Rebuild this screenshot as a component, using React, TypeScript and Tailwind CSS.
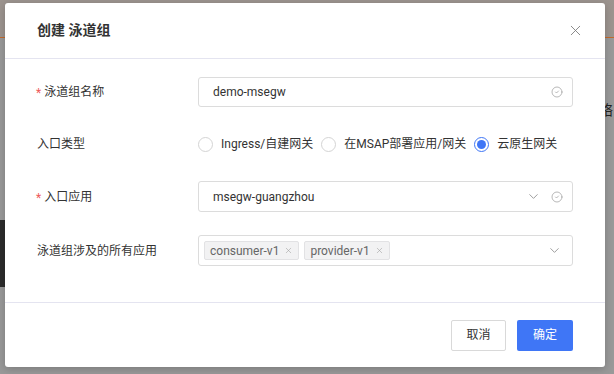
import { X, CircleCheck, ChevronDown } from "lucide-react";

const font = { fontFamily: '"Roboto", "Noto Sans CJK SC", sans-serif' };

function Label({ text, required }: { text: string; required?: boolean }) {
  return (
    <div className="w-[161px] shrink-0 text-[12px] text-[#333] flex items-center">
      {required && <span className="text-[#ee5a5a] mr-[3px] -ml-[1px] mt-[2px]">*</span>}
      {text}
    </div>
  );
}

function Radio({ label, checked }: { label: string; checked?: boolean }) {
  return (
    <label className="flex items-center mr-[8px]">
      <span
        className={
          checked
            ? "w-[15px] h-[15px] rounded-full border border-[#3f76f6] flex items-center justify-center"
            : "w-[15px] h-[15px] rounded-full border border-[#d4d4d4] bg-white"
        }
      >
        {checked && <span className="w-[9px] h-[9px] rounded-full bg-[#3f76f6]" />}
      </span>
      <span className="ml-[8px] text-[12px] text-[#333]">{label}</span>
    </label>
  );
}

function Tag({ text }: { text: string }) {
  return (
    <span className="flex items-center h-[19px] px-[5px] mr-[5px] bg-[#f2f2f3] border border-[#e2e2e4] rounded-[2px] text-[12px] text-[#666]">
      {text}
      <X size={9} strokeWidth={1.4} className="ml-[5px] text-[#999]" />
    </span>
  );
}

export default function App() {
  return (
    <div className="relative w-[614px] h-[374px] overflow-hidden bg-[#999999]" style={font}>
      {/* page behind the mask */}
      <div className="h-[38px] bg-[#9c948f] border-b border-[#c46a2c]" />
      <div className="flex justify-end pr-[1px] pt-[62px] text-[14px] text-[#222]">络</div>
      <div className="absolute left-0 top-[220px] w-[60px] h-[67px] bg-[#2c2c2c]" />

      <div className="absolute left-[5px] top-[3px] w-[600px] h-[364px] bg-white rounded-[3px] shadow-[0_2px_8px_rgba(0,0,0,0.2)] flex flex-col">
        <div className="h-[56px] shrink-0 flex items-center justify-between pl-[32px] pr-[21px] border-b border-[#e4e4f0]">
          <span className="text-[14px] font-bold text-[#333]">创建 泳道组</span>
          <X size={17} strokeWidth={1.2} className="text-[#777]" />
        </div>

        <div className="flex-1 flex flex-col px-[32px] pt-[18px]">
          <div className="flex items-center h-[30px]">
            <Label text="泳道组名称" required />
            <div className="flex-1 h-[30px] border border-[#dcdcdc] rounded-[3px] flex items-center justify-between pl-[14px] pr-[9px] text-[12px] text-[#333]">
              demo-msegw
              <CircleCheck size={12} strokeWidth={1.4} className="text-[#999]" />
            </div>
          </div>

          <div className="flex items-center h-[30px] mt-[22px]">
            <Label text="入口类型" />
            <Radio label="Ingress/自建网关" />
            <Radio label="在MSAP部署应用/网关" />
            <Radio label="云原生网关" checked />
          </div>

          <div className="flex items-center h-[31px] mt-[22px]">
            <Label text="入口应用" required />
            <div className="flex-1 h-[31px] border border-[#dcdcdc] rounded-[3px] flex items-center pl-[14px] pr-[9px] text-[12px] text-[#333]">
              <span className="flex-1">msegw-guangzhou</span>
              <ChevronDown size={15} strokeWidth={1.3} className="text-[#888] mr-[10px]" />
              <CircleCheck size={12} strokeWidth={1.4} className="text-[#999]" />
            </div>
          </div>

          <div className="flex items-center h-[31px] mt-[23px]">
            <Label text="泳道组涉及的所有应用" />
            <div className="flex-1 h-[31px] border border-[#dcdcdc] rounded-[3px] flex items-center pl-[5px] pr-[10px]">
              <Tag text="consumer-v1" />
              <Tag text="provider-v1" />
              <span className="flex-1" />
              <ChevronDown size={15} strokeWidth={1.3} className="text-[#888]" />
            </div>
          </div>
        </div>

        <div className="h-[65px] shrink-0 border-t border-[#e4e4f0] flex items-center justify-end gap-[11px] px-[32px]">
          <button className="w-[55px] h-[31px] border border-[#d9d9d9] rounded-[2px] bg-white text-[12px] text-[#333]">
            取消
          </button>
          <button className="w-[56px] h-[31px] rounded-[2px] bg-[#3f76f6] text-[12px] text-white">
            确定
          </button>
        </div>
      </div>
    </div>
  );
}
